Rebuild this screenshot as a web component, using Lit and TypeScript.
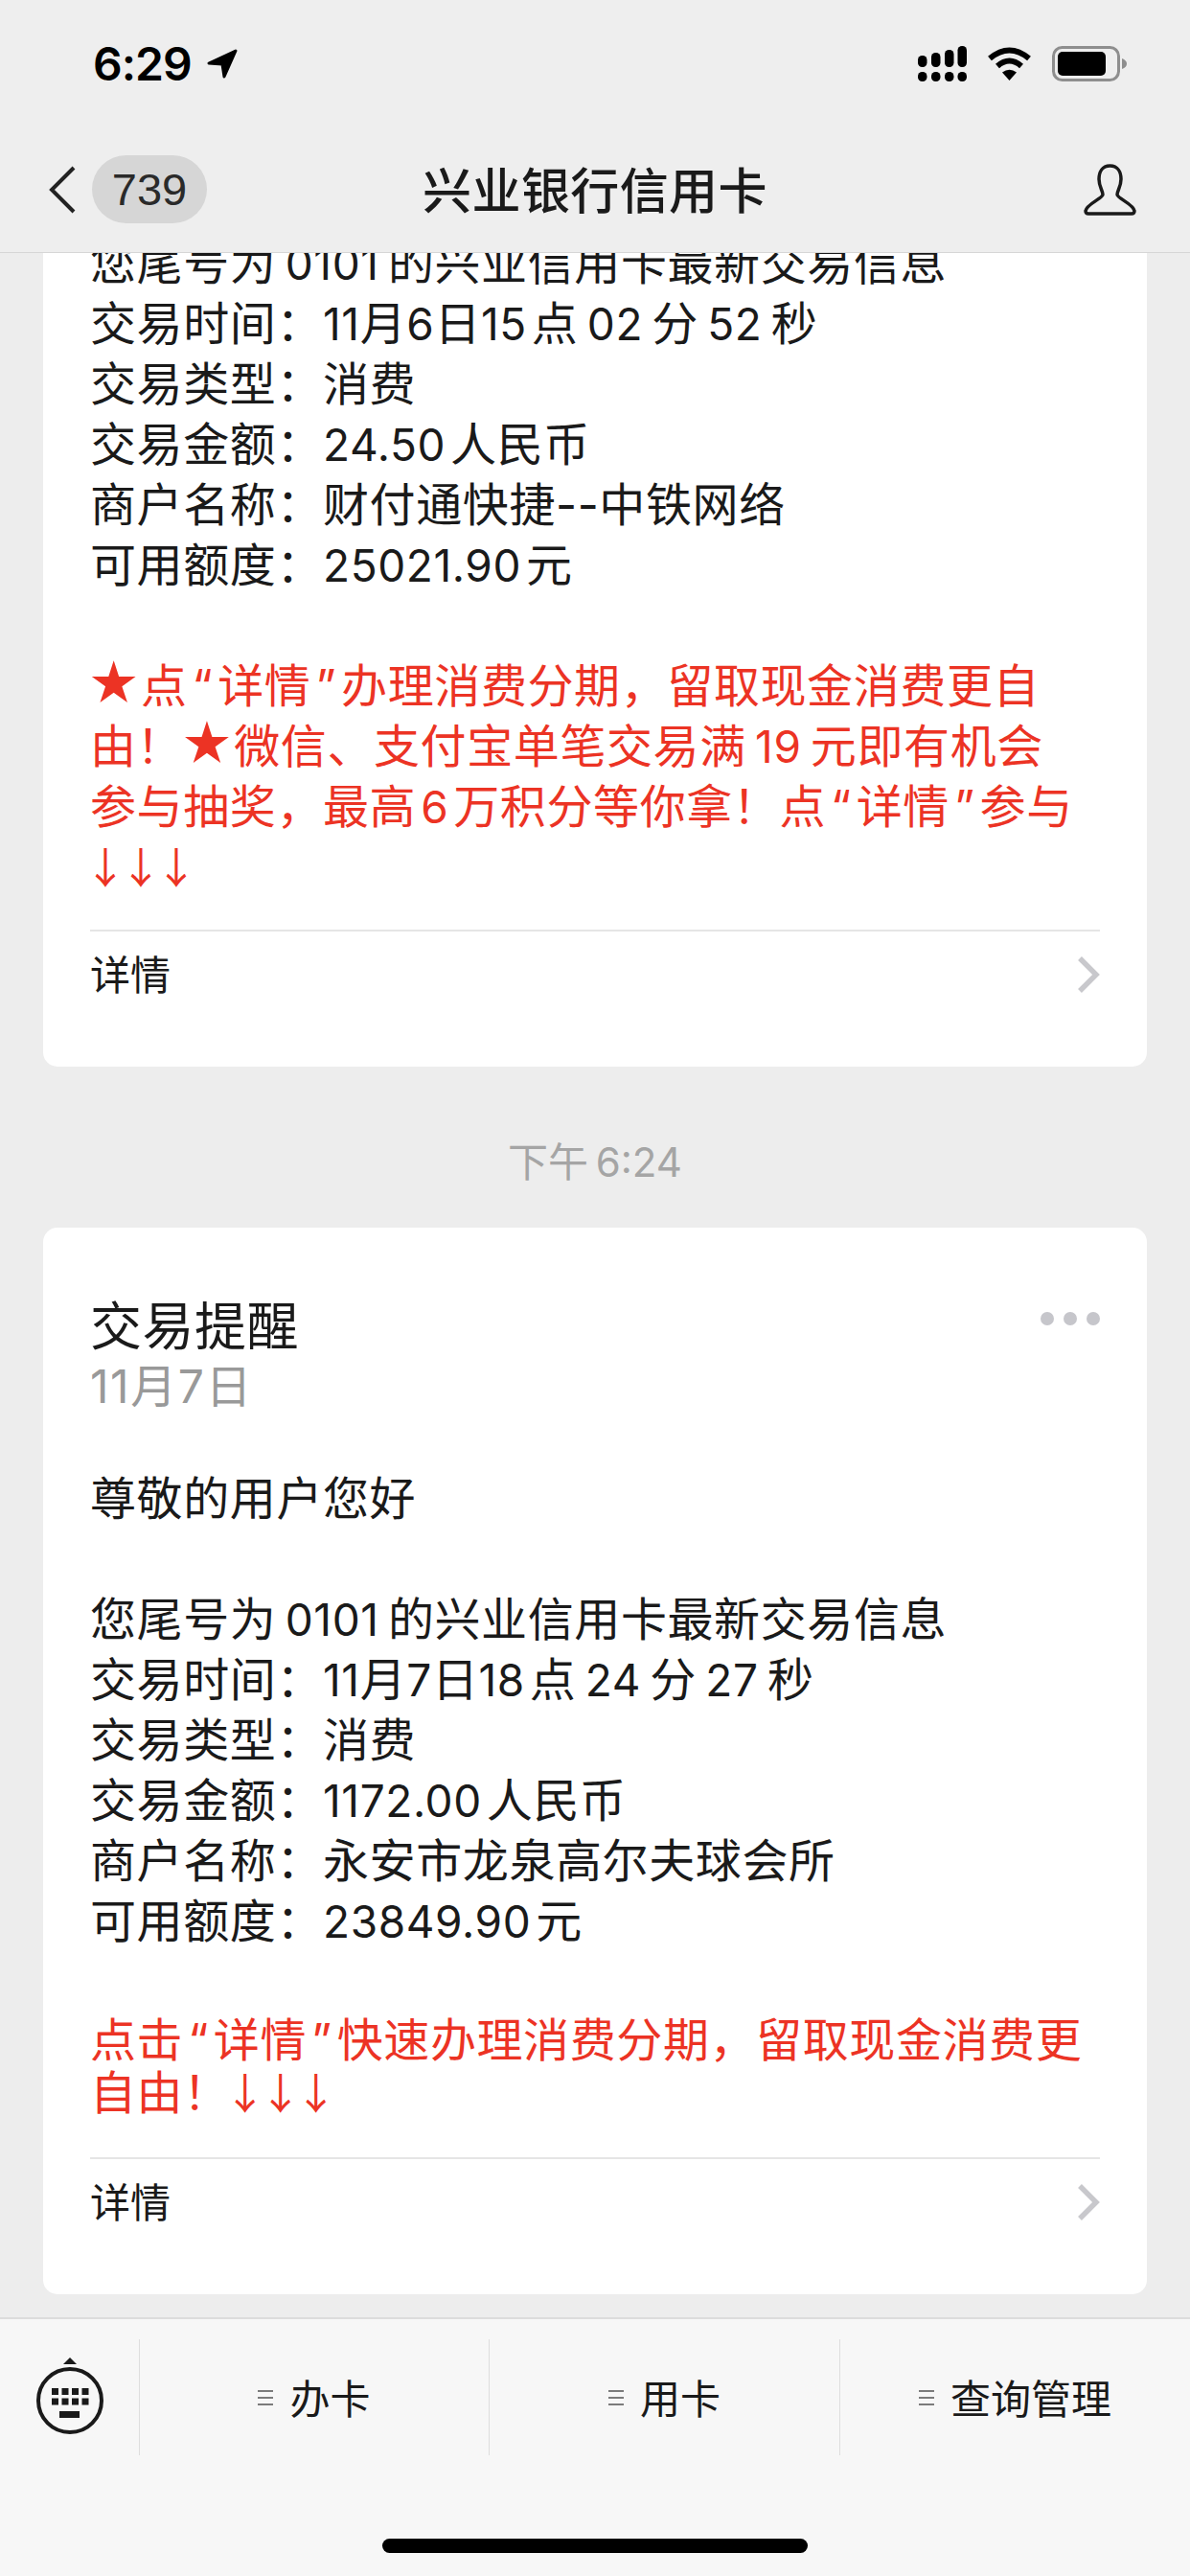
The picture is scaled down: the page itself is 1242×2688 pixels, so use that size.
import { LitElement, html, css, svg } from 'lit';
import { customElement } from 'lit/decorators.js';
import { classMap } from 'lit/directives/class-map.js';

const chevron = html`<svg class="chev" width="24" height="40" viewBox="0 0 24 40"><path d="M3 3 L20 20 L3 37" fill="none" stroke="#c8c8cc" stroke-width="5.5"/></svg>`;

const burger = html`<svg width="16" height="16" viewBox="0 0 16 16"><path d="M0 1h16M0 8h16M0 15h16" stroke="#7b7b7b" stroke-width="2"/></svg>`;

const keys = [16, 26.5, 37, 47.5].flatMap((x) => [32, 42.5].map((y) => svg`<rect x=${x} y=${y} width="7" height="7" fill="#1a1a1a"/>`));

// thin and hair spaces, the gaps iOS leaves between latin and CJK runs
const t = '\u2009';
const h = '\u200a';

interface CardData {
  title?: string;
  date?: string;
  greeting?: string;
  info: string[];
  promo: string[];
  tight?: boolean;
}

const cards: CardData[] = [
  {
    info: [
      `您尾号为${t}0101${t}的兴业信用卡最新交易信息`,
      `交易时间：11月6日15${h}点${t}02${t}分${t}52${t}秒`,
      '交易类型：消费',
      `交易金额：24.50${h}人民币`,
      '商户名称：财付通快捷--中铁网络',
      `可用额度：25021.90${h}元`,
    ],
    promo: [
      `★点${h}“${h}详情${h}”${h}办理消费分期，留取现金消费更自`,
      `由！★微信、支付宝单笔交易满${t}19${t}元即有机会`,
      `参与抽奖，最高${h}6${h}万积分等你拿！点${h}“${h}详情${h}”${h}参与`,
      '↓↓↓',
    ],
  },
  {
    title: '交易提醒',
    date: '11月7日',
    greeting: '尊敬的用户您好',
    info: [
      `您尾号为${t}0101${t}的兴业信用卡最新交易信息`,
      `交易时间：11月7日18${h}点${t}24${t}分${t}27${t}秒`,
      '交易类型：消费',
      `交易金额：1172.00${h}人民币`,
      '商户名称：永安市龙泉高尔夫球会所',
      `可用额度：23849.90${h}元`,
    ],
    promo: [`点击${h}“${h}详情${h}”${h}快速办理消费分期，留取现金消费更`, '自由！↓↓↓'],
    tight: true,
  },
];

// digits, stars and arrows each need their own size to match the iOS metrics
function lineParts(l: string) {
  return l.split(/(★|↓+|[\d.]+)/).map((part) => {
    if (part === '★') return html`<span class="star">${part}</span>`;
    if (part.startsWith('↓')) return html`<span class="arrows">${part}</span>`;
    if (/^[\d.]+$/.test(part)) return html`<span class="num">${part}</span>`;
    return part;
  });
}

@customElement('app-root')
export class AppRoot extends LitElement {
  static styles = css`
    :host {
      display: block;
      width: 1242px;
      height: 2688px;
      font-family: Inter, 'Noto Sans CJK SC', sans-serif;
      color: #1a1a1a;
    }
    .page {
      height: 100%;
      display: flex;
      flex-direction: column;
      background: #ededed;
    }
    .header {
      flex: none;
      background: #eeeeee;
      border-bottom: 1px solid #d6d6d6;
    }
    .status {
      height: 132px;
      display: flex;
      align-items: center;
      padding: 0 65px 0 97px;
    }
    .time {
      font-size: 48px;
      font-weight: 600;
      color: #000;
      letter-spacing: -1px;
      margin-right: 15px;
    }
    .status-right {
      margin-left: auto;
      display: flex;
      align-items: center;
      gap: 21px;
    }
    .nav {
      height: 131px;
      display: grid;
      grid-template-columns: 1fr auto 1fr;
      align-items: center;
    }
    .nav-left {
      display: flex;
      align-items: center;
      padding-left: 51px;
      gap: 17px;
    }
    .badge {
      width: 120px;
      height: 71px;
      border-radius: 36px;
      background: #d6d6d6;
      display: flex;
      align-items: center;
      justify-content: center;
      font-family: 'Liberation Sans', sans-serif;
      font-size: 47px;
      color: #2a2a2a;
    }
    .title {
      font-size: 51px;
      letter-spacing: 0.4px;
      font-weight: 500;
      padding-bottom: 3px;
    }
    .nav-right {
      display: flex;
      justify-content: flex-end;
      padding-right: 55px;
    }
    .feed {
      flex: 1;
      min-height: 0;
      overflow: hidden;
      display: flex;
      flex-direction: column;
      justify-content: flex-end;
      padding-bottom: 24px;
    }
    .card {
      flex: none;
      margin: 0 45px;
      padding: 62px 49px 0;
      background: #fff;
      border-radius: 15px;
    }
    .card-head {
      display: flex;
      justify-content: space-between;
      align-items: center;
      height: 74px;
    }
    .card-title {
      font-size: 54px;
      letter-spacing: 0.5px;
    }
    .dots {
      display: flex;
      gap: 10px;
      margin-top: -8px;
    }
    .dots i {
      width: 14px;
      height: 14px;
      border-radius: 50%;
      background: #c6c6cb;
    }
    .date {
      font-size: 48px;
      letter-spacing: 1.6px;
      line-height: 60px;
      color: #999;
      margin-bottom: 55px;
    }
    .line {
      font-size: 48px;
      letter-spacing: 0.6px;
      line-height: 63px;
      height: 63px;
      white-space: nowrap;
    }
    .num {
      font-size: 46px;
      line-height: 0;
    }
    .star {
      font-size: 53px;
      line-height: 0;
      margin-left: -3px;
    }
    .arrows {
      font-family: 'Noto Sans CJK SC', sans-serif;
      font-size: 44px;
      line-height: 0;
      letter-spacing: -7px;
      margin-left: -6px;
    }
    .greeting {
      margin-bottom: 63px;
    }
    .promo {
      margin-top: 63px;
      margin-bottom: 34px;
      color: #ec3324;
    }
    .promo.tight {
      margin-top: 65px;
      margin-bottom: 40px;
    }
    .promo.tight .line {
      line-height: 55px;
      height: 55px;
    }
    .more {
      height: 143px;
      border-top: 2px solid #e5e5e5;
      box-sizing: border-box;
      padding-top: 23px;
      display: flex;
      justify-content: space-between;
      align-items: flex-start;
      font-size: 42px;
      line-height: 46px;
    }
    .chev {
      margin-top: 2px;
    }
    .stamp {
      flex: none;
      height: 168px;
      display: flex;
      align-items: center;
      justify-content: center;
      padding-top: 24px;
      box-sizing: border-box;
      font-size: 42px;
      color: #a5a5a5;
    }
    .footer {
      flex: none;
      height: 270px;
      box-sizing: border-box;
      background: #f7f7f7;
      border-top: 2px solid #dcdcdc;
      display: flex;
      flex-direction: column;
      padding-top: 21px;
    }
    .menu {
      height: 121px;
      display: grid;
      grid-template-columns: 145px 365px 366px 366px;
    }
    .kbd {
      display: flex;
      justify-content: center;
      padding-top: 19px;
    }
    .menu-item {
      border-left: 1px solid #dedede;
      display: flex;
      align-items: center;
      justify-content: center;
      gap: 17px;
      font-size: 42px;
    }
    .menu-item span {
      padding-bottom: 3px;
    }
    .home {
      align-self: center;
      width: 444px;
      height: 15px;
      margin-top: 87px;
      border-radius: 8px;
      background: #000;
    }
  `;

  renderCard(c: CardData) {
    return html`<div class="card">
      ${c.title
        ? html`<div class="card-head">
              <span class="card-title">${c.title}</span>
              <span class="dots"><i></i><i></i><i></i></span>
            </div>
            <div class="date">${c.date}</div>
            <div class="line greeting">${c.greeting}</div>`
        : ''}
      ${c.info.map((l) => html`<div class="line">${lineParts(l)}</div>`)}
      <div class=${classMap({ promo: true, tight: !!c.tight })}>
        ${c.promo.map((l) => html`<div class="line">${lineParts(l)}</div>`)}
      </div>
      <div class="more"><span>详情</span>${chevron}</div>
    </div>`;
  }

  render() {
    return html`<div class="page">
      <div class="header">
        <div class="status">
          <span class="time">6:29</span>
          <svg width="33" height="31" viewBox="0 0 33 31"><path d="M31 2 L3 15 L17 16 L19 29 Z" fill="#000" stroke="#000" stroke-width="3" stroke-linejoin="round"/></svg>
          <div class="status-right">
            <svg width="51" height="37" viewBox="0 0 51 37">
              <rect x="0" y="10" width="9.5" height="12" rx="4.5"/>
              <rect x="14" y="7" width="9.5" height="15" rx="4.5"/>
              <rect x="28" y="4" width="9.5" height="18" rx="4.5"/>
              <rect x="41.5" y="0" width="9.5" height="22" rx="4.5"/>
              <rect x="0" y="27" width="9.5" height="10" rx="4.5"/>
              <rect x="14" y="27" width="9.5" height="10" rx="4.5"/>
              <rect x="28" y="27" width="9.5" height="10" rx="4.5"/>
              <rect x="41.5" y="27" width="9.5" height="10" rx="4.5"/>
            </svg>
            <svg width="47" height="35" viewBox="0 0 47 35">
              <path d="M3 12 Q23.5 -5 44 12" fill="none" stroke="#000" stroke-width="6"/>
              <path d="M11 20 Q23.5 9 36 20" fill="none" stroke="#000" stroke-width="6"/>
              <path d="M23.5 35 L16 26.5 Q23.5 21 31 26.5 Z"/>
            </svg>
            <svg width="79" height="37" viewBox="0 0 79 37">
              <rect x="1.5" y="1.5" width="68" height="34" rx="9" fill="none" stroke="#8e8e8e" stroke-width="3"/>
              <rect x="6" y="6" width="50" height="25" rx="5"/>
              <path d="M73 13 Q78 15 78 18.5 Q78 22 73 24 Z" fill="#8e8e8e"/>
            </svg>
          </div>
        </div>
        <div class="nav">
          <div class="nav-left">
            <svg width="28" height="50" viewBox="0 0 28 50"><path d="M26 2 L3 25 L26 48" fill="none" stroke="#222" stroke-width="4"/></svg>
            <span class="badge">739</span>
          </div>
          <div class="title">兴业银行信用卡</div>
          <div class="nav-right">
            <svg width="57" height="54" viewBox="0 0 57 54"><path d="M28.5 2 C20 2 17 9 17 16 C17 24 21 28 21 32 C21 36 4 42 3 49 C3 51 4 52 6 52 L51 52 C53 52 54 51 54 49 C53 42 36 36 36 32 C36 28 40 24 40 16 C40 9 37 2 28.5 2 Z" fill="none" stroke="#1a1a1a" stroke-width="3.5"/></svg>
          </div>
        </div>
      </div>
      <div class="feed">
        ${this.renderCard(cards[0])}
        <div class="stamp">下午${t}6:24</div>
        ${this.renderCard(cards[1])}
      </div>
      <div class="footer">
        <div class="menu">
          <div class="kbd">
            <svg width="70" height="80" viewBox="0 0 70 80">
              <path d="M28 7 L35 0 L42 7 Z" fill="#1a1a1a"/>
              <circle cx="35" cy="45" r="33" fill="none" stroke="#1a1a1a" stroke-width="4"/>
              ${keys}
              <rect x="24" y="56" width="21" height="7" fill="#1a1a1a"/>
            </svg>
          </div>
          ${['办卡', '用卡', '查询管理'].map((m) => html`<div class="menu-item">${burger}<span>${m}</span></div>`)}
        </div>
        <div class="home"></div>
      </div>
    </div>`;
  }
}
